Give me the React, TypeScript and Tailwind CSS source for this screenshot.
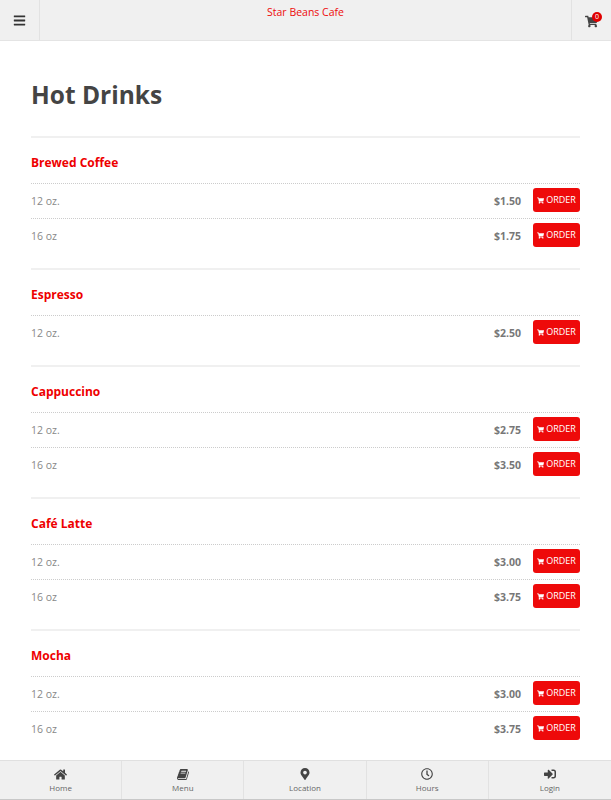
import { FaBars, FaHome, FaMapMarkerAlt, FaRegClock, FaShoppingCart, FaSignInAlt } from "react-icons/fa";

const sections = [
  { name: "Brewed Coffee", rows: [["12 oz.", "$1.50"], ["16 oz", "$1.75"]] },
  { name: "Espresso", rows: [["12 oz.", "$2.50"]] },
  { name: "Cappuccino", rows: [["12 oz.", "$2.75"], ["16 oz", "$3.50"]] },
  { name: "Café Latte", rows: [["12 oz.", "$3.00"], ["16 oz", "$3.75"]] },
  { name: "Mocha", rows: [["12 oz.", "$3.00"], ["16 oz", "$3.75"]] },
];

// slanted book, the icon set has only an upright one
const BookIcon = () => (
  <svg viewBox="0 0 1664 1792" width="12" height="13" fill="currentColor">
    <path d="M1639 478q40 57 18 129l-275 906q-19 64-76.5 107.5t-122.5 43.5h-923q-77 0-148.5-53.5t-99.5-131.5q-24-67-2-127 0-4 3-27t4-37q1-8-3-21.5t-3-19.5q2-11 8-21t16.5-23.5 16.5-23.5q23-38 45-91.5t30-91.5q3-10 .5-30t-.5-28q3-11 17-28t17-23q21-36 42-92t25-90q1-9-2.5-32t.5-28q4-13 22-30.5t22-22.5q19-26 42.5-84.5t27.5-96.5q1-8-3-25.5t-2-26.5q2-8 9-18t18-23 17-21q8-12 16.5-30.5t15-35 16-36 19.5-32 26.5-23.5 36-11.5 47.5 5.5l-1 3q38-9 51-9h761q74 0 114 56t18 130l-274 906q-36 119-71.5 153.5t-128.5 34.5h-869q-27 0-38 15-11 16-1 43 24 70 144 70h923q29 0 56-15.5t35-41.5l300-987q7-22 5-57 38 15 59 43zm-1064 2q-4 13 2 22.5t20 9.5h608q13 0 25.5-9.5t16.5-22.5l21-64q4-13-2-22.5t-20-9.5h-608q-13 0-25.5 9.5t-16.5 22.5zm-83 256q-4 13 2 22.5t20 9.5h608q13 0 25.5-9.5t16.5-22.5l21-64q4-13-2-22.5t-20-9.5h-608q-13 0-25.5 9.5t-16.5 22.5z" />
  </svg>
);

const tabs = [
  { label: "Home", icon: <FaHome size={13} /> },
  { label: "Menu", icon: <BookIcon /> },
  { label: "Location", icon: <FaMapMarkerAlt size={12} /> },
  { label: "Hours", icon: <FaRegClock size={12} /> },
  { label: "Login", icon: <FaSignInAlt size={12} /> },
];

const App = () => {
  return (
    <div className="h-[800px] overflow-hidden bg-white flex flex-col font-['Open_Sans',sans-serif]">
      <header className="h-[41px] shrink-0 bg-[#f0f0f0] border-b border-[#e4e4e4] flex">
        <button className="w-10 border-r border-[#e2e2e2] flex items-center justify-center text-[#333]">
          <FaBars size={13} />
        </button>
        <div className="flex-1 text-center text-[10.5px] leading-none pt-[7px] text-[#ee0a0a]">
          Star Beans Cafe
        </div>
        <button className="w-10 border-l border-[#e2e2e2] flex items-center justify-center text-[#444] relative">
          <FaShoppingCart size={13} className="mt-[3px]" />
          <span className="absolute top-3 right-[9px] w-[10px] h-[10px] rounded-full bg-[#e00000] text-white text-[7px] leading-[10px] text-center">
            0
          </span>
        </button>
      </header>

      <main className="flex-1 min-h-0 overflow-hidden px-[31px]">
        <h1 className="text-[24.5px] leading-9 font-bold text-[#444] pt-9 pb-[23px] box-content">Hot Drinks</h1>
        {sections.map((section) => (
          <section key={section.name} className="border-t-2 border-[#f0f0f0] pb-[15px]">
            <h2 className="h-[45px] pt-1 flex items-center text-[12px] font-bold text-[#ee0000]">{section.name}</h2>
            {section.rows.map(([size, price]) => (
              <div key={size} className="h-[35px] border-t border-dotted border-[#ccc] flex items-center text-[10.5px] text-[#888]">
                <span className="flex-1 mt-[2px]">{size}</span>
                <span className="font-bold text-[#777] mr-3 mt-[2px]">{price}</span>
                <button className="w-[47px] h-6 mb-[2px] rounded-[3px] bg-[#ee0a0a] text-white text-[9px] flex items-center justify-center gap-[2px]">
                  <FaShoppingCart size={7} />
                  ORDER
                </button>
              </div>
            ))}
          </section>
        ))}
      </main>

      <nav className="h-10 shrink-0 bg-[#f0f0f0] border-t border-b border-t-[#e0e0e0] border-b-[#c8c8c8] grid grid-cols-5">
        {tabs.map((tab, i) => (
          <div key={tab.label} className={`flex flex-col items-center justify-center text-[#444] pt-[1px] ${i < 4 ? "border-r border-[#e2e2e2]" : ""}`}>
            <div className="h-[13px] flex items-center">{tab.icon}</div>
            <span className="text-[8px] leading-3 mt-[1px] text-[#666]">{tab.label}</span>
          </div>
        ))}
      </nav>
    </div>
  );
};

export default App;
